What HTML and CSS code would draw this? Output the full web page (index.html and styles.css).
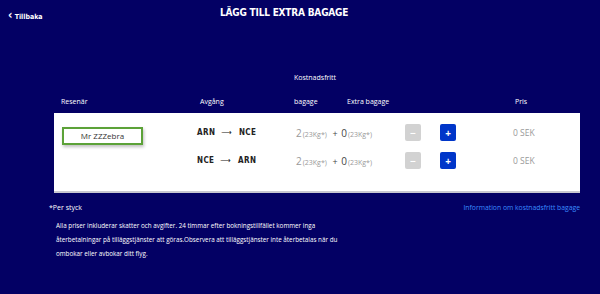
FILE: index.html
```html
<!DOCTYPE html>
<html lang="sv">
<head>
    <meta charset="UTF-8">
    <meta name="viewport" content="width=device-width, initial-scale=1.0">
    <title>Lägg till extra bagage</title>
    <link rel="stylesheet" href="styles.css">
</head>
<body>
    <div class="topbar">
        <a class="back" href="#"><span class="chev">&#8249;</span> Tillbaka</a>
        <h1>LÄGG TILL EXTRA BAGAGE</h1>
    </div>

    <div class="page">
        <div class="super-head">Kostnadsfritt</div>
        <div class="head-row">
            <div class="h-pax">Resenär</div>
            <div class="h-dep">Avgång</div>
            <div class="h-free">bagage</div>
            <div class="h-extra">Extra bagage</div>
            <div class="h-price">Pris</div>
        </div>

        <div class="card">
            <div class="pax-col">
                <div class="pax-name">Mr ZZZebra</div>
            </div>
            <div class="legs">
                <div class="leg">
                    <div class="route">ARN <span class="arrow">&#10230;</span> NCE</div>
                    <div class="bags">2<small>(23Kg*)</small> <span class="plus-sign">+</span> <span class="extra">0</span><small>(23Kg*)</small></div>
                    <div class="btn-cell"><span class="btn minus">&minus;</span></div>
                    <div class="btn-cell wide"><span class="btn add">+</span></div>
                    <div class="price">0 SEK</div>
                </div>
                <div class="leg">
                    <div class="route">NCE <span class="arrow">&#10230;</span> ARN</div>
                    <div class="bags">2<small>(23Kg*)</small> <span class="plus-sign">+</span> <span class="extra">0</span><small>(23Kg*)</small></div>
                    <div class="btn-cell"><span class="btn minus">&minus;</span></div>
                    <div class="btn-cell wide"><span class="btn add">+</span></div>
                    <div class="price">0 SEK</div>
                </div>
            </div>
        </div>

        <div class="foot-row">
            <span class="per">*Per styck</span>
            <a class="info" href="#">Information om kostnadsfritt bagage</a>
        </div>

        <p class="terms">Alla priser inkluderar skatter och avgifter. 24 timmar efter bokningstillfället kommer inga återbetalningar på tilläggstjänster att göras.Observera att tilläggstjänster inte återbetalas när du ombokar eller avbokar ditt flyg.</p>
    </div>
</body>
</html>
```

FILE: styles.css
```css
body {
    margin: 0;
    background: #030064;
    color: #fff;
    font-family: "Open Sans", Arial, sans-serif;
    font-size: 7px;
    width: 600px;
    height: 294px;
    overflow: hidden;
}
.topbar {
    display: flex;
    align-items: flex-start;
    padding: 6px 0 0 8px;
    height: 40px;
    box-sizing: border-box;
}
.back {
    width: 212px;
    padding-top: 6px;
    color: #fff;
    text-decoration: none;
    font-weight: bold;
    font-size: 7px;
    font-family: "DejaVu Sans Condensed", "DejaVu Sans", sans-serif;
}
.chev {
    font-size: 12px;
    line-height: 7px;
}
h1 {
    margin: 1px 0 0;
    font-family: "DejaVu Sans Condensed", "DejaVu Sans", sans-serif;
    font-size: 10px;
    font-weight: bold;
    letter-spacing: -0.2px;
    line-height: 12px;
}
.page {
    margin-left: 54px;
    width: 526px;
}
.super-head {
    padding-left: 240px;
    margin-top: 33px;
    line-height: 10px;
}
.head-row {
    display: flex;
    margin-top: 14px;
    line-height: 10px;
    height: 16px;
}
.h-pax { width: 139px; padding-left: 7px; box-sizing: border-box; }
.h-dep { width: 101px; padding-left: 7px; box-sizing: border-box; }
.h-free { width: 53px; }
.h-extra { width: 168px; }
.card {
    background: #fff;
    display: flex;
    height: 80px;
    box-sizing: border-box;
    padding: 11px 0 0 8px;
    border-bottom: 2px solid #c8c8d0;
    color: #888;
}
.pax-col {
    width: 135px;
    padding-top: 3px;
}
.pax-name {
    width: 81px;
    height: 18px;
    box-sizing: border-box;
    border: 2px solid #5ca238;
    box-shadow: 1px 2px 3px rgba(0, 0, 0, 0.25);
    color: #333;
    font-size: 8px;
    text-align: center;
    line-height: 14px;
}
.legs {
    display: flex;
    flex-direction: column;
    gap: 11px;
}
.leg {
    display: flex;
    align-items: center;
    height: 17px;
}
.route {
    width: 99px;
    color: #222;
    font-weight: bold;
    font-size: 8px;
    letter-spacing: 0.4px;
    font-family: "DejaVu Sans Condensed", "DejaVu Sans", sans-serif;
}
.arrow {
    font-weight: normal;
    margin: 0 4px 0 3px;
}
.bags {
    width: 109px;
    font-size: 10px;
    color: #999;
}
.bags small {
    font-size: 7px;
    margin-left: 1px;
}
.plus-sign {
    color: #444;
    font-size: 9px;
    margin: 0 1px 0 3px;
}
.extra { color: #444; }
.btn-cell { width: 35px; }
.btn-cell.wide { width: 73px; }
.btn {
    display: flex;
    align-items: center;
    justify-content: center;
    width: 16px;
    height: 17px;
    border-radius: 2px;
    color: #fff;
    font-weight: bold;
    font-size: 10px;
}
.minus { background: #d2d2d2; }
.add { background: #0036c9; }
.price {
    font-size: 8.5px;
    color: #999;
}
.foot-row {
    display: flex;
    justify-content: space-between;
    margin: 10px 0 0 -5px;
    line-height: 10px;
}
.info {
    color: #3a8cff;
    text-decoration: none;
    font-size: 6.8px;
}
.terms {
    margin: 6px 0 0 2px;
    width: 288px;
    font-size: 6.3px;
    line-height: 14px;
}
```
